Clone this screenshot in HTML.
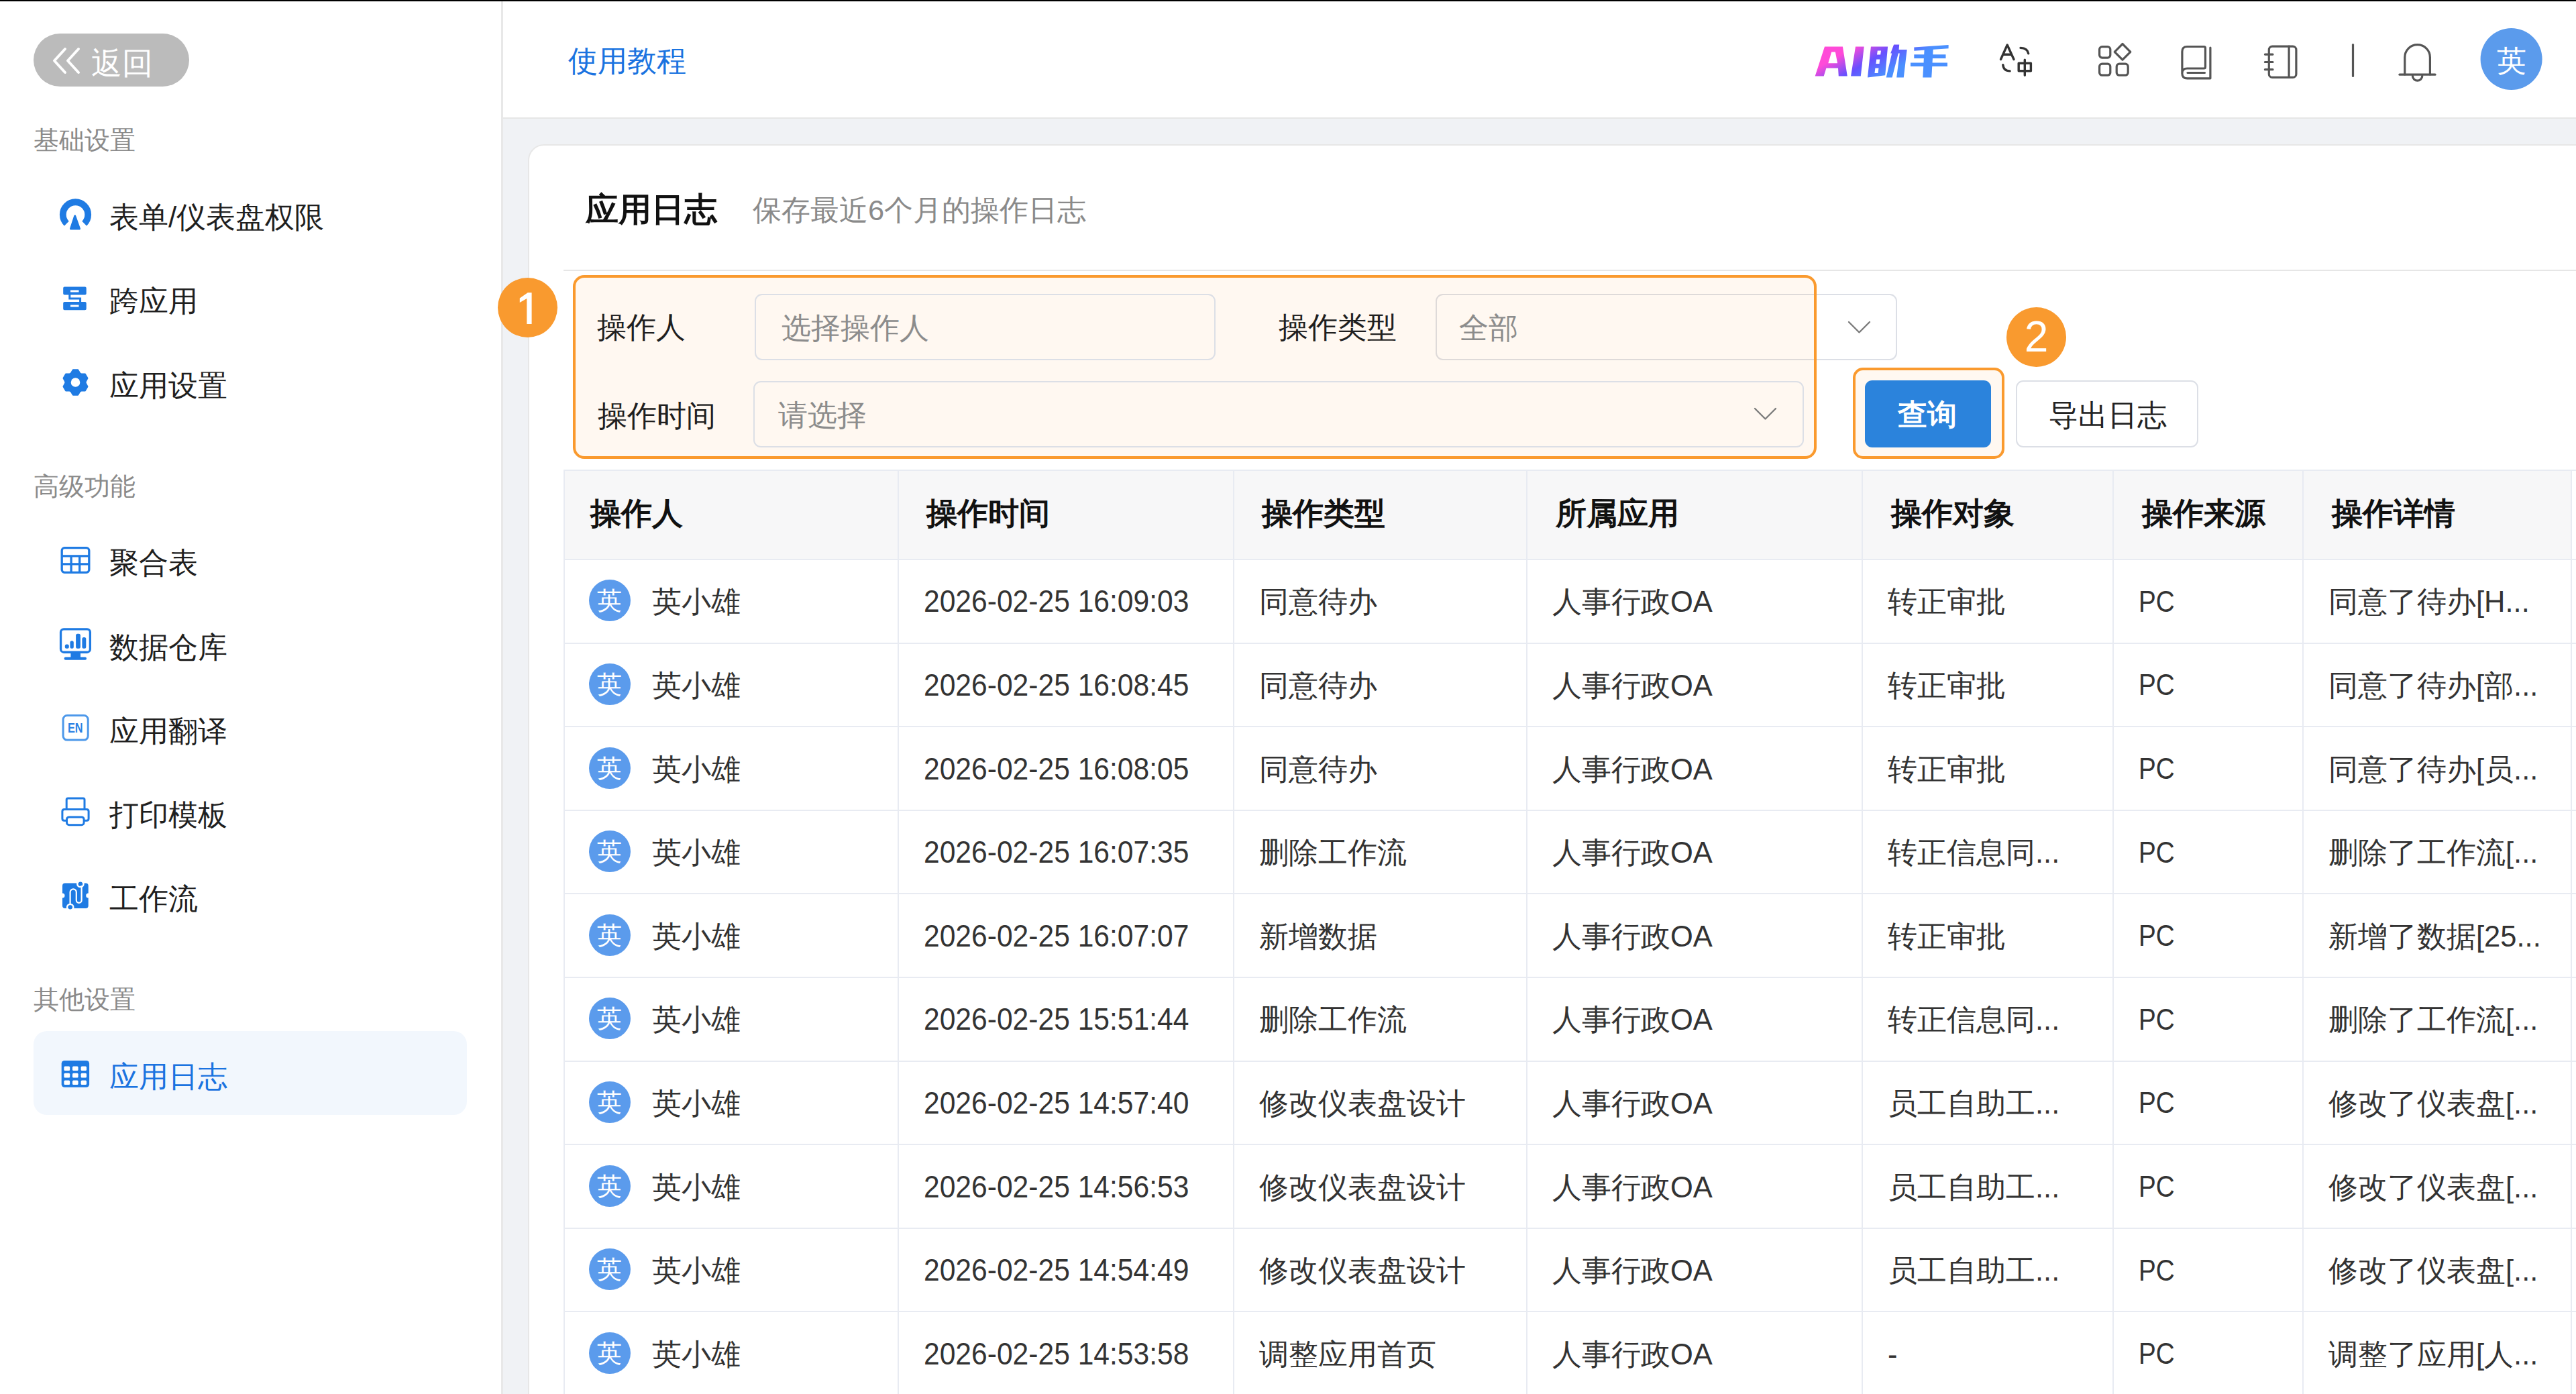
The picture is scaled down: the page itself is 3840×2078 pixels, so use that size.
<!DOCTYPE html>
<html><head><meta charset="utf-8">
<style>
html,body{margin:0;padding:0;}
body{width:3840px;height:2078px;overflow:hidden;position:relative;background:#f0f2f5;font-family:"Liberation Sans",sans-serif;color:#222;}
.a{position:absolute;white-space:nowrap;}
#topline{left:0;top:0;width:3840px;height:2px;background:#000;z-index:50;}
#side{left:0;top:0;width:747px;height:2078px;background:#fff;border-right:3px solid #e8e8e8;}
#head{left:750px;top:0;width:3090px;height:175px;background:#fff;border-bottom:2px solid #e6e6e6;}
.lbl{font-size:38px;color:#8a8a8a;height:60px;line-height:60px;}
.mi{font-size:44px;color:#1f1f1f;height:100px;line-height:100px;}
#card{left:787px;top:215px;width:3200px;height:2000px;background:#fff;border:2px solid #e7e7e7;border-radius:24px;box-sizing:border-box;}
.t{height:100px;line-height:100px;}
</style></head>
<body>
<div class="a" id="topline"></div>

<!-- SIDEBAR -->
<div class="a" id="side"></div>
<div class="a" style="left:50px;top:50px;width:232px;height:79px;border-radius:40px;background:#bbbbbb;"></div>
<div class="a" style="left:136px;top:44px;height:100px;line-height:100px;font-size:46px;color:#fff;">返回</div>

<div class="a lbl" style="left:50px;top:179px;">基础设置</div>
<div class="a mi" style="left:163px;top:274px;">表单/仪表盘权限</div>
<div class="a mi" style="left:163px;top:399px;">跨应用</div>
<div class="a mi" style="left:163px;top:525px;">应用设置</div>

<div class="a lbl" style="left:50px;top:695px;">高级功能</div>
<div class="a mi" style="left:163px;top:789px;">聚合表</div>
<div class="a mi" style="left:163px;top:915px;">数据仓库</div>
<div class="a mi" style="left:163px;top:1040px;">应用翻译</div>
<div class="a mi" style="left:163px;top:1165px;">打印模板</div>
<div class="a mi" style="left:163px;top:1290px;">工作流</div>

<div class="a lbl" style="left:50px;top:1460px;">其他设置</div>
<div class="a" style="left:50px;top:1537px;width:646px;height:125px;border-radius:20px;background:#f2f7fd;"></div>
<div class="a mi" style="left:163px;top:1555px;color:#1a73e0;">应用日志</div>

<svg class="a" style="left:0;top:0" width="748" height="2078" viewBox="0 0 748 2078">
 <g fill="none" stroke="#fff" stroke-width="4" stroke-linecap="round" stroke-linejoin="round">
  <path d="M97,73 L81,90.5 L97,108"/><path d="M117,73 L101,90.5 L117,108"/>
 </g>
 <g fill="#1f7be3" stroke="none">
  <!-- gauge -->
  <path d="M99.3,333.2 A18.7,18.7 0 1 1 125.7,333.2" fill="none" stroke="#1f7be3" stroke-width="9.8"/>
  <path d="M111.7,322 L118.5,341 L105.5,341 Z" stroke="#1f7be3" stroke-width="3" stroke-linejoin="round"/>
  <!-- cross app -->
  <path fill-rule="evenodd" d="M96.2,427.5 H126.7 q2,0 2,2 V437.6 q0,2 -2,2 H96.2 q-2,0 -2,-2 V429.5 q0,-2 2,-2 Z M105,432.6 V435.4 H117.5 V432.6 Z"/>
  <path fill-rule="evenodd" d="M96.2,450 H126.7 q2,0 2,2 V460.2 q0,2 -2,2 H96.2 q-2,0 -2,-2 V452 q0,-2 2,-2 Z M105,454.6 V457.6 H117.5 V454.6 Z"/>
  <path d="M103.8,439 V445 H119.6 V450" fill="none" stroke="#1f7be3" stroke-width="3"/>
  <!-- gear -->
  <path d="M105.84,556.34 L108.87,551.35 L116.13,551.35 L119.16,556.34 A15.2,15.2 0 0 1 121.00,557.40 L126.84,557.53 L130.46,563.81 L127.66,568.94 A15.2,15.2 0 0 1 127.66,571.06 L130.46,576.19 L126.84,582.47 L121.00,582.60 A15.2,15.2 0 0 1 119.16,583.66 L116.13,588.65 L108.87,588.65 L105.84,583.66 A15.2,15.2 0 0 1 104.00,582.60 L98.16,582.47 L94.54,576.19 L97.34,571.06 A15.2,15.2 0 0 1 97.34,568.94 L94.54,563.81 L98.16,557.53 L104.00,557.40 A15.2,15.2 0 0 1 105.84,556.34 Z" stroke="#1f7be3" stroke-width="2" stroke-linejoin="round"/>
   <circle cx="112.5" cy="570" r="6.8" fill="#fff"/>
 </g>
 <g fill="none" stroke="#1f7be3" stroke-width="3.3">
  <!-- table -->
  <rect x="92.2" y="816.7" width="40.6" height="36.6" rx="4"/>
  <path d="M92.2,828.8 H132.8 M92.2,840.9 H132.8 M106.1,828.8 V853.3 M118.7,828.8 V853.3"/>
  <!-- monitor -->
  <rect x="90.55" y="937.85" width="43.8" height="34.4" rx="4.5"/>
 </g>
 <g fill="#1f7be3">
  <rect x="105.4" y="972" width="14.6" height="8.5"/>
  <rect x="95.6" y="979.5" width="33.4" height="4.2" rx="2"/>
  <rect x="96.8" y="960.6" width="6" height="6.1" rx="2.5"/>
  <rect x="104.5" y="955.3" width="5.3" height="11.4" rx="2.5"/>
  <rect x="113.1" y="944.8" width="6.8" height="21.9" rx="2.5"/>
  <rect x="122.4" y="950" width="5.9" height="16.7" rx="2.5"/>
 </g>
 <!-- EN -->
 <rect x="94.1" y="1066.5" width="37.1" height="36.6" rx="6" fill="none" stroke="#4d98ea" stroke-width="3"/>
 <text x="101" y="1092.3" font-family="Liberation Sans" font-weight="bold" font-size="19.5" fill="#2b82e4" textLength="22.6" lengthAdjust="spacingAndGlyphs">EN</text>
 <!-- printer -->
 <g fill="none" stroke="#1f7be3" stroke-width="3">
  <path d="M99.2,1206 V1192 q0,-2 2,-2 H124 q2,0 2,2 V1206"/>
  <path d="M99.5,1223.3 H95.9 q-3,0 -3,-3 V1209.5 q0,-3 3,-3 H129.1 q3,0 3,3 V1220.3 q0,3 -3,3 H125.1"/>
  <rect x="99.5" y="1217.9" width="25.6" height="11.9" rx="3.5"/>
 </g>
 <!-- workflow -->
 <path fill="#1f7be3" d="M97,1316.4 H127.7 q4,0 4,4 V1331.5 a3.5,3.5 0 0 0 0,7 V1350 q0,4 -4,4 H97 q-4,0 -4,-4 V1338.5 a3.5,3.5 0 0 0 0,-7 V1320.4 q0,-4 4,-4 Z"/>
 <g fill="none" stroke="#fff" stroke-width="2.2">
  <path d="M104.6,1349 V1330 a4.6,4.6 0 0 1 9.2,0 V1342 a3.9,3.9 0 0 0 7.8,0 V1322 L119.9,1317"/>
  <circle cx="119.9" cy="1317.5" r="4.6" stroke-width="2.5"/>
  <circle cx="104.7" cy="1352.5" r="4.6" stroke-width="2.5"/>
 </g>
 <circle cx="119.9" cy="1317.5" r="3" fill="#1f7be3"/>
 <circle cx="104.7" cy="1352.5" r="3" fill="#1f7be3"/>
 <!-- grid filled -->
 <rect x="91.7" y="1581" width="41.4" height="39.8" rx="4.5" fill="#1f7be3"/>
 <g fill="#fff">
  <rect x="95.4" y="1589.6" width="8.8" height="6.4" rx="1.5"/><rect x="108" y="1589.6" width="8.6" height="6.4" rx="1.5"/><rect x="120.6" y="1589.6" width="8.4" height="6.4" rx="1.5"/>
  <rect x="95.4" y="1599.8" width="8.8" height="6.8" rx="1.5"/><rect x="108" y="1599.8" width="8.6" height="6.8" rx="1.5"/><rect x="120.6" y="1599.8" width="8.4" height="6.8" rx="1.5"/>
  <rect x="95.4" y="1610.6" width="8.8" height="6.4" rx="1.5"/><rect x="108" y="1610.6" width="8.6" height="6.4" rx="1.5"/><rect x="120.6" y="1610.6" width="8.4" height="6.4" rx="1.5"/>
 </g>
</svg>

<!-- HEADER -->
<div class="a" id="head"></div>
<div class="a" style="left:847px;top:41px;height:100px;line-height:100px;font-size:43.5px;color:#1a73e0;">使用教程</div>

<svg class="a" style="left:2600px;top:0" width="1240" height="175" viewBox="2600 0 1240 175">
 <defs>
  <linearGradient id="aig" gradientUnits="userSpaceOnUse" x1="2770" y1="66" x2="2800" y2="118">
   <stop offset="0" stop-color="#ff4ad8"/><stop offset="0.5" stop-color="#6650ff"/><stop offset="1" stop-color="#4a90ff"/>
  </linearGradient>
 </defs>
 <g fill="url(#aig)" fill-rule="evenodd">
  <path d="M2705.7,113.4 L2720,69.4 L2746.9,69.4 L2753.8,113.4 L2740.8,113.4 L2740,101.6 L2722.4,101.6 L2718.7,113.4 Z M2725.3,94.2 L2739.1,94.2 L2735.9,77.5 L2730.2,77.5 Z"/>
  <path d="M2759.1,113.4 L2766,69.4 L2778.7,69.4 L2773.8,113.4 Z"/>
  <path d="M2784,115.4 L2788.9,69.4 L2814.1,69.4 L2810.2,112.2 Z M2798.8,75.5 L2804,75.5 L2803.2,81.6 L2798,81.6 Z M2797.2,88.5 L2802.3,88.5 L2801.5,95 L2796.4,95 Z M2795.4,101.6 L2800.5,101.6 L2799.6,108.9 L2794.5,108.9 Z"/>
  <path d="M2823.1,66.5 L2831.2,66.5 L2830.6,73.9 L2842.7,73.9 L2837.8,115.4 L2827.2,115.4 L2831.8,79.6 L2829.8,79.6 L2820.6,115.4 L2811.7,115.4 L2820.2,79.6 L2818.2,79.6 Z"/>
  <path d="M2853.3,70.6 L2904.6,66.9 L2904.6,72.2 L2853.3,75.8 Z"/>
  <path d="M2853.3,81.2 L2900.5,81.2 L2900.5,86.9 L2853.3,86.9 Z"/>
  <path d="M2848,93.4 L2903,93.4 L2903,99.1 L2848,99.1 Z"/>
  <path d="M2868.7,72.2 L2881.8,72.2 L2879.3,115.4 L2866.3,115.4 Z"/>
 </g>
 <g fill="none" stroke="#555" stroke-width="3.2" stroke-linecap="round" stroke-linejoin="round">
  <!-- translate -->
  <g stroke="#333" stroke-width="3.4">
  <path d="M2982.5,88.5 L2992.2,67 L3002,88.5 M2985.8,81.2 H2998.6"/>
  <path d="M3012,71.4 q10.5,0.5 11.7,8.4"/>
  <path d="M2985.8,96.7 q0.8,9.2 10.3,9.2"/>
  <path d="M3009.2,94.2 H3027.4 V105.8 H3009.2 Z M3018.3,89.3 V112.3"/>
  </g>
  <!-- apps -->
  <rect x="3129.6" y="69.6" width="16.2" height="16.5" rx="4"/>
  <rect x="3129.6" y="95.2" width="16.2" height="17" rx="4"/>
  <rect x="3155.2" y="95.2" width="17" height="17" rx="4"/>
  <path d="M3164,65.5 L3175.8,77.3 L3164,89.1 L3152.2,77.3 Z"/>
  <!-- book -->
  <path d="M3252.9,110 V77 q0,-7.5 7.5,-7.5 H3285.5 q2,0 2,2 V100 q0,2 -2,2 H3260.5 q-7.6,0 -7.6,7.4 q0,7.4 7.6,7.4 H3294.9 V71"/>
  <path d="M3261,108.5 H3286.5"/>
  <!-- notebook -->
  <rect x="3382.3" y="69.2" width="40.6" height="46.2" rx="5"/>
  <path d="M3412.1,69.2 V115.4 M3376.4,81.1 H3388 M3376.4,92.5 H3388 M3376.4,103.7 H3388"/>
  <!-- divider -->
  <path d="M3507.5,66.5 V113.5"/>
  <!-- bell -->
  <path d="M3584.8,111 V85.5 a18.8,18.8 0 0 1 37.6,0 V111"/>
  <path d="M3577,111.2 H3630"/>
  <path d="M3596.4,113 a7.2,7.2 0 0 0 14.4,0"/>
 </g>
 <circle cx="3743.6" cy="88" r="46" fill="#5b9bec"/>
 <text x="3721.6" y="106.3" font-family="Liberation Sans" font-size="44" fill="#fff">英</text>
</svg>


<!-- CARD -->
<div class="a" id="card"></div>
<div class="a" style="left:873px;top:262px;height:100px;line-height:100px;font-size:49px;font-weight:bold;color:#111;">应用日志</div>
<div class="a" style="left:1122px;top:263px;height:100px;line-height:100px;font-size:43.4px;color:#8a8a8a;">保存最近6个月的操作日志</div>
<div class="a" style="left:840px;top:402px;width:3000px;height:2px;background:#e6e6e6;"></div>

<div class="a" style="left:2140px;top:438px;width:687.5px;height:99px;box-sizing:border-box;border:2px solid #dcdfe6;border-radius:11px;background:#fff;"></div>
<div class="a" style="left:854px;top:410px;width:1854px;height:274px;box-sizing:border-box;border:4px solid #fa9a2e;border-radius:17px;background:rgba(250,154,46,0.065);"></div>
<div class="a" style="left:1125px;top:438px;width:687px;height:99px;box-sizing:border-box;border:2px solid #dcdfe6;border-radius:11px;"></div>
<div class="a" style="left:1123px;top:568px;width:1566px;height:99px;box-sizing:border-box;border:2px solid #dcdfe6;border-radius:11px;"></div>
<div class="a t" style="left:890px;top:438px;font-size:43.5px;color:#1f1f1f;">操作人</div>
<div class="a t" style="left:1165px;top:439px;font-size:43.5px;color:#8c8c8c;">选择操作人</div>
<div class="a t" style="left:1906px;top:438px;font-size:43.5px;color:#1f1f1f;">操作类型</div>
<div class="a t" style="left:2175px;top:439px;font-size:43.5px;color:#8c8c8c;">全部</div>
<div class="a t" style="left:891px;top:570px;font-size:43.5px;color:#1f1f1f;">操作时间</div>
<div class="a t" style="left:1160px;top:569px;font-size:43.5px;color:#8c8c8c;">请选择</div>
<svg class="a" style="left:0;top:0" width="3840" height="700" viewBox="0 0 3840 700">
 <g fill="none" stroke="#7c7c7c" stroke-width="2.4" stroke-linecap="round" stroke-linejoin="round">
  <path d="M2756,480 L2771.5,495.5 L2787,480"/>
  <path d="M2616,609 L2631.5,624.5 L2647,609"/>
 </g>
</svg>
<div class="a" style="left:2762px;top:548px;width:226px;height:136px;box-sizing:border-box;border:4px solid #fa9a2e;border-radius:15px;background:rgba(250,154,46,0.065);"></div>
<div class="a" style="left:2780px;top:567px;width:188px;height:100px;border-radius:11px;background:#2b83dc;"></div>
<div class="a t" style="left:2829px;top:568px;font-size:44px;font-weight:bold;color:#fff;">查询</div>
<div class="a" style="left:3005px;top:567px;width:272px;height:100px;box-sizing:border-box;border:2px solid #dcdfe6;border-radius:11px;background:#fff;"></div>
<div class="a t" style="left:3054px;top:569px;font-size:43.5px;color:#222;">导出日志</div>
<div class="a" style="left:741.5px;top:413.5px;width:89px;height:89px;border-radius:50%;background:#f99a2f;"></div>
<svg class="a" style="left:741.5px;top:413.5px" width="89" height="89" viewBox="741.5 413.5 89 89"><path fill="#fff" d="M774.3,444 L786.2,435.8 L792.1,435.8 L792.1,482.4 L784.8,482.4 L784.8,444.6 L774.3,450.6 Z"/></svg>
<div class="a" style="left:2991px;top:457.5px;width:89px;height:89px;border-radius:50%;background:#f99a2f;"></div>
<div class="a" style="left:2991px;top:457.5px;width:89px;height:89px;line-height:89px;text-align:center;font-size:64px;color:#fff;">2</div>
<div class="a" style="left:841px;top:700px;width:2999px;height:1400px;">
<div class="a" style="left:0;top:0;width:2992px;height:133px;background:#f7f7f8;"></div>
<div class="a" style="left:38.5px;top:16px;height:100px;line-height:100px;font-size:45.5px;font-weight:bold;color:#111;">操作人</div>
<div class="a" style="left:540.0px;top:16px;height:100px;line-height:100px;font-size:45.5px;font-weight:bold;color:#111;">操作时间</div>
<div class="a" style="left:1040.0px;top:16px;height:100px;line-height:100px;font-size:45.5px;font-weight:bold;color:#111;">操作类型</div>
<div class="a" style="left:1477.5px;top:16px;height:100px;line-height:100px;font-size:45.5px;font-weight:bold;color:#111;">所属应用</div>
<div class="a" style="left:1977.5px;top:16px;height:100px;line-height:100px;font-size:45.5px;font-weight:bold;color:#111;">操作对象</div>
<div class="a" style="left:2351.9px;top:16px;height:100px;line-height:100px;font-size:45.5px;font-weight:bold;color:#111;">操作来源</div>
<div class="a" style="left:2634.5px;top:16px;height:100px;line-height:100px;font-size:45.5px;font-weight:bold;color:#111;">操作详情</div>
<div class="a" style="left:0;top:0;width:2999px;height:2px;background:#e8ebf2;"></div>
<div class="a" style="left:0;top:133.0px;width:2999px;height:2px;background:#e8ebf2;"></div>
<div class="a" style="left:0;top:257.6px;width:2999px;height:2px;background:#e8ebf2;"></div>
<div class="a" style="left:0;top:382.2px;width:2999px;height:2px;background:#e8ebf2;"></div>
<div class="a" style="left:0;top:506.8px;width:2999px;height:2px;background:#e8ebf2;"></div>
<div class="a" style="left:0;top:631.4px;width:2999px;height:2px;background:#e8ebf2;"></div>
<div class="a" style="left:0;top:756.0px;width:2999px;height:2px;background:#e8ebf2;"></div>
<div class="a" style="left:0;top:880.6px;width:2999px;height:2px;background:#e8ebf2;"></div>
<div class="a" style="left:0;top:1005.2px;width:2999px;height:2px;background:#e8ebf2;"></div>
<div class="a" style="left:0;top:1129.8px;width:2999px;height:2px;background:#e8ebf2;"></div>
<div class="a" style="left:0;top:1254.4px;width:2999px;height:2px;background:#e8ebf2;"></div>
<div class="a" style="left:0;top:1379.0px;width:2999px;height:2px;background:#e8ebf2;"></div>
<div class="a" style="left:0;top:1503.6px;width:2999px;height:2px;background:#e8ebf2;"></div>
<div class="a" style="left:-1.0px;top:0;width:2px;height:1400px;background:#e8ebf2;"></div>
<div class="a" style="left:496.5px;top:0;width:2px;height:1400px;background:#e8ebf2;"></div>
<div class="a" style="left:996.5px;top:0;width:2px;height:1400px;background:#e8ebf2;"></div>
<div class="a" style="left:1434.0px;top:0;width:2px;height:1400px;background:#e8ebf2;"></div>
<div class="a" style="left:1934.0px;top:0;width:2px;height:1400px;background:#e8ebf2;"></div>
<div class="a" style="left:2308.4px;top:0;width:2px;height:1400px;background:#e8ebf2;"></div>
<div class="a" style="left:2591.0px;top:0;width:2px;height:1400px;background:#e8ebf2;"></div>
<div class="a" style="left:2991.0px;top:0;width:2px;height:1400px;background:#e8ebf2;"></div>
<div class="a" style="left:36.5px;top:164.3px;width:62px;height:62px;border-radius:50%;background:#5b9bec;"></div>
<div class="a" style="left:36.5px;top:165.3px;width:62px;height:62px;line-height:62px;text-align:center;color:#fff;font-size:37px;">英</div>
<div class="a" style="left:131px;top:147.3px;height:100px;line-height:100px;font-size:43.5px;color:#333;">英小雄</div>
<div class="a" style="left:535.5px;top:146.3px;height:100px;line-height:100px;font-size:46.6px;color:#333;transform:scaleX(0.914);transform-origin:0 0;">2026-02-25 16:09:03</div>
<div class="a" style="left:1035.5px;top:147.3px;height:100px;line-height:100px;font-size:43.5px;color:#333;">同意待办</div>
<div class="a" style="left:1473px;top:147.3px;height:100px;line-height:100px;font-size:43.5px;color:#333;">人事行政OA</div>
<div class="a" style="left:1973px;top:147.3px;height:100px;line-height:100px;font-size:43.5px;color:#333;">转正审批</div>
<div class="a" style="left:2347.4px;top:146.8px;height:100px;line-height:100px;font-size:45px;color:#333;transform:scaleX(0.86);transform-origin:0 0;">PC</div>
<div class="a" style="left:2630px;top:147.3px;height:100px;line-height:100px;font-size:43.5px;color:#333;">同意了待办[H...</div>
<div class="a" style="left:36.5px;top:288.9px;width:62px;height:62px;border-radius:50%;background:#5b9bec;"></div>
<div class="a" style="left:36.5px;top:289.9px;width:62px;height:62px;line-height:62px;text-align:center;color:#fff;font-size:37px;">英</div>
<div class="a" style="left:131px;top:271.9px;height:100px;line-height:100px;font-size:43.5px;color:#333;">英小雄</div>
<div class="a" style="left:535.5px;top:270.9px;height:100px;line-height:100px;font-size:46.6px;color:#333;transform:scaleX(0.914);transform-origin:0 0;">2026-02-25 16:08:45</div>
<div class="a" style="left:1035.5px;top:271.9px;height:100px;line-height:100px;font-size:43.5px;color:#333;">同意待办</div>
<div class="a" style="left:1473px;top:271.9px;height:100px;line-height:100px;font-size:43.5px;color:#333;">人事行政OA</div>
<div class="a" style="left:1973px;top:271.9px;height:100px;line-height:100px;font-size:43.5px;color:#333;">转正审批</div>
<div class="a" style="left:2347.4px;top:271.4px;height:100px;line-height:100px;font-size:45px;color:#333;transform:scaleX(0.86);transform-origin:0 0;">PC</div>
<div class="a" style="left:2630px;top:271.9px;height:100px;line-height:100px;font-size:43.5px;color:#333;">同意了待办[部...</div>
<div class="a" style="left:36.5px;top:413.5px;width:62px;height:62px;border-radius:50%;background:#5b9bec;"></div>
<div class="a" style="left:36.5px;top:414.5px;width:62px;height:62px;line-height:62px;text-align:center;color:#fff;font-size:37px;">英</div>
<div class="a" style="left:131px;top:396.5px;height:100px;line-height:100px;font-size:43.5px;color:#333;">英小雄</div>
<div class="a" style="left:535.5px;top:395.5px;height:100px;line-height:100px;font-size:46.6px;color:#333;transform:scaleX(0.914);transform-origin:0 0;">2026-02-25 16:08:05</div>
<div class="a" style="left:1035.5px;top:396.5px;height:100px;line-height:100px;font-size:43.5px;color:#333;">同意待办</div>
<div class="a" style="left:1473px;top:396.5px;height:100px;line-height:100px;font-size:43.5px;color:#333;">人事行政OA</div>
<div class="a" style="left:1973px;top:396.5px;height:100px;line-height:100px;font-size:43.5px;color:#333;">转正审批</div>
<div class="a" style="left:2347.4px;top:396.0px;height:100px;line-height:100px;font-size:45px;color:#333;transform:scaleX(0.86);transform-origin:0 0;">PC</div>
<div class="a" style="left:2630px;top:396.5px;height:100px;line-height:100px;font-size:43.5px;color:#333;">同意了待办[员...</div>
<div class="a" style="left:36.5px;top:538.1px;width:62px;height:62px;border-radius:50%;background:#5b9bec;"></div>
<div class="a" style="left:36.5px;top:539.1px;width:62px;height:62px;line-height:62px;text-align:center;color:#fff;font-size:37px;">英</div>
<div class="a" style="left:131px;top:521.1px;height:100px;line-height:100px;font-size:43.5px;color:#333;">英小雄</div>
<div class="a" style="left:535.5px;top:520.1px;height:100px;line-height:100px;font-size:46.6px;color:#333;transform:scaleX(0.914);transform-origin:0 0;">2026-02-25 16:07:35</div>
<div class="a" style="left:1035.5px;top:521.1px;height:100px;line-height:100px;font-size:43.5px;color:#333;">删除工作流</div>
<div class="a" style="left:1473px;top:521.1px;height:100px;line-height:100px;font-size:43.5px;color:#333;">人事行政OA</div>
<div class="a" style="left:1973px;top:521.1px;height:100px;line-height:100px;font-size:43.5px;color:#333;">转正信息同...</div>
<div class="a" style="left:2347.4px;top:520.6px;height:100px;line-height:100px;font-size:45px;color:#333;transform:scaleX(0.86);transform-origin:0 0;">PC</div>
<div class="a" style="left:2630px;top:521.1px;height:100px;line-height:100px;font-size:43.5px;color:#333;">删除了工作流[...</div>
<div class="a" style="left:36.5px;top:662.7px;width:62px;height:62px;border-radius:50%;background:#5b9bec;"></div>
<div class="a" style="left:36.5px;top:663.7px;width:62px;height:62px;line-height:62px;text-align:center;color:#fff;font-size:37px;">英</div>
<div class="a" style="left:131px;top:645.7px;height:100px;line-height:100px;font-size:43.5px;color:#333;">英小雄</div>
<div class="a" style="left:535.5px;top:644.7px;height:100px;line-height:100px;font-size:46.6px;color:#333;transform:scaleX(0.914);transform-origin:0 0;">2026-02-25 16:07:07</div>
<div class="a" style="left:1035.5px;top:645.7px;height:100px;line-height:100px;font-size:43.5px;color:#333;">新增数据</div>
<div class="a" style="left:1473px;top:645.7px;height:100px;line-height:100px;font-size:43.5px;color:#333;">人事行政OA</div>
<div class="a" style="left:1973px;top:645.7px;height:100px;line-height:100px;font-size:43.5px;color:#333;">转正审批</div>
<div class="a" style="left:2347.4px;top:645.2px;height:100px;line-height:100px;font-size:45px;color:#333;transform:scaleX(0.86);transform-origin:0 0;">PC</div>
<div class="a" style="left:2630px;top:645.7px;height:100px;line-height:100px;font-size:43.5px;color:#333;">新增了数据[25...</div>
<div class="a" style="left:36.5px;top:787.3px;width:62px;height:62px;border-radius:50%;background:#5b9bec;"></div>
<div class="a" style="left:36.5px;top:788.3px;width:62px;height:62px;line-height:62px;text-align:center;color:#fff;font-size:37px;">英</div>
<div class="a" style="left:131px;top:770.3px;height:100px;line-height:100px;font-size:43.5px;color:#333;">英小雄</div>
<div class="a" style="left:535.5px;top:769.3px;height:100px;line-height:100px;font-size:46.6px;color:#333;transform:scaleX(0.914);transform-origin:0 0;">2026-02-25 15:51:44</div>
<div class="a" style="left:1035.5px;top:770.3px;height:100px;line-height:100px;font-size:43.5px;color:#333;">删除工作流</div>
<div class="a" style="left:1473px;top:770.3px;height:100px;line-height:100px;font-size:43.5px;color:#333;">人事行政OA</div>
<div class="a" style="left:1973px;top:770.3px;height:100px;line-height:100px;font-size:43.5px;color:#333;">转正信息同...</div>
<div class="a" style="left:2347.4px;top:769.8px;height:100px;line-height:100px;font-size:45px;color:#333;transform:scaleX(0.86);transform-origin:0 0;">PC</div>
<div class="a" style="left:2630px;top:770.3px;height:100px;line-height:100px;font-size:43.5px;color:#333;">删除了工作流[...</div>
<div class="a" style="left:36.5px;top:911.9px;width:62px;height:62px;border-radius:50%;background:#5b9bec;"></div>
<div class="a" style="left:36.5px;top:912.9px;width:62px;height:62px;line-height:62px;text-align:center;color:#fff;font-size:37px;">英</div>
<div class="a" style="left:131px;top:894.9px;height:100px;line-height:100px;font-size:43.5px;color:#333;">英小雄</div>
<div class="a" style="left:535.5px;top:893.9px;height:100px;line-height:100px;font-size:46.6px;color:#333;transform:scaleX(0.914);transform-origin:0 0;">2026-02-25 14:57:40</div>
<div class="a" style="left:1035.5px;top:894.9px;height:100px;line-height:100px;font-size:43.5px;color:#333;">修改仪表盘设计</div>
<div class="a" style="left:1473px;top:894.9px;height:100px;line-height:100px;font-size:43.5px;color:#333;">人事行政OA</div>
<div class="a" style="left:1973px;top:894.9px;height:100px;line-height:100px;font-size:43.5px;color:#333;">员工自助工...</div>
<div class="a" style="left:2347.4px;top:894.4px;height:100px;line-height:100px;font-size:45px;color:#333;transform:scaleX(0.86);transform-origin:0 0;">PC</div>
<div class="a" style="left:2630px;top:894.9px;height:100px;line-height:100px;font-size:43.5px;color:#333;">修改了仪表盘[...</div>
<div class="a" style="left:36.5px;top:1036.5px;width:62px;height:62px;border-radius:50%;background:#5b9bec;"></div>
<div class="a" style="left:36.5px;top:1037.5px;width:62px;height:62px;line-height:62px;text-align:center;color:#fff;font-size:37px;">英</div>
<div class="a" style="left:131px;top:1019.5px;height:100px;line-height:100px;font-size:43.5px;color:#333;">英小雄</div>
<div class="a" style="left:535.5px;top:1018.5px;height:100px;line-height:100px;font-size:46.6px;color:#333;transform:scaleX(0.914);transform-origin:0 0;">2026-02-25 14:56:53</div>
<div class="a" style="left:1035.5px;top:1019.5px;height:100px;line-height:100px;font-size:43.5px;color:#333;">修改仪表盘设计</div>
<div class="a" style="left:1473px;top:1019.5px;height:100px;line-height:100px;font-size:43.5px;color:#333;">人事行政OA</div>
<div class="a" style="left:1973px;top:1019.5px;height:100px;line-height:100px;font-size:43.5px;color:#333;">员工自助工...</div>
<div class="a" style="left:2347.4px;top:1019.0px;height:100px;line-height:100px;font-size:45px;color:#333;transform:scaleX(0.86);transform-origin:0 0;">PC</div>
<div class="a" style="left:2630px;top:1019.5px;height:100px;line-height:100px;font-size:43.5px;color:#333;">修改了仪表盘[...</div>
<div class="a" style="left:36.5px;top:1161.1px;width:62px;height:62px;border-radius:50%;background:#5b9bec;"></div>
<div class="a" style="left:36.5px;top:1162.1px;width:62px;height:62px;line-height:62px;text-align:center;color:#fff;font-size:37px;">英</div>
<div class="a" style="left:131px;top:1144.1px;height:100px;line-height:100px;font-size:43.5px;color:#333;">英小雄</div>
<div class="a" style="left:535.5px;top:1143.1px;height:100px;line-height:100px;font-size:46.6px;color:#333;transform:scaleX(0.914);transform-origin:0 0;">2026-02-25 14:54:49</div>
<div class="a" style="left:1035.5px;top:1144.1px;height:100px;line-height:100px;font-size:43.5px;color:#333;">修改仪表盘设计</div>
<div class="a" style="left:1473px;top:1144.1px;height:100px;line-height:100px;font-size:43.5px;color:#333;">人事行政OA</div>
<div class="a" style="left:1973px;top:1144.1px;height:100px;line-height:100px;font-size:43.5px;color:#333;">员工自助工...</div>
<div class="a" style="left:2347.4px;top:1143.6px;height:100px;line-height:100px;font-size:45px;color:#333;transform:scaleX(0.86);transform-origin:0 0;">PC</div>
<div class="a" style="left:2630px;top:1144.1px;height:100px;line-height:100px;font-size:43.5px;color:#333;">修改了仪表盘[...</div>
<div class="a" style="left:36.5px;top:1285.7px;width:62px;height:62px;border-radius:50%;background:#5b9bec;"></div>
<div class="a" style="left:36.5px;top:1286.7px;width:62px;height:62px;line-height:62px;text-align:center;color:#fff;font-size:37px;">英</div>
<div class="a" style="left:131px;top:1268.7px;height:100px;line-height:100px;font-size:43.5px;color:#333;">英小雄</div>
<div class="a" style="left:535.5px;top:1267.7px;height:100px;line-height:100px;font-size:46.6px;color:#333;transform:scaleX(0.914);transform-origin:0 0;">2026-02-25 14:53:58</div>
<div class="a" style="left:1035.5px;top:1268.7px;height:100px;line-height:100px;font-size:43.5px;color:#333;">调整应用首页</div>
<div class="a" style="left:1473px;top:1268.7px;height:100px;line-height:100px;font-size:43.5px;color:#333;">人事行政OA</div>
<div class="a" style="left:1973px;top:1268.7px;height:100px;line-height:100px;font-size:43.5px;color:#333;">-</div>
<div class="a" style="left:2347.4px;top:1268.2px;height:100px;line-height:100px;font-size:45px;color:#333;transform:scaleX(0.86);transform-origin:0 0;">PC</div>
<div class="a" style="left:2630px;top:1268.7px;height:100px;line-height:100px;font-size:43.5px;color:#333;">调整了应用[人...</div>
</div>
</body></html>
